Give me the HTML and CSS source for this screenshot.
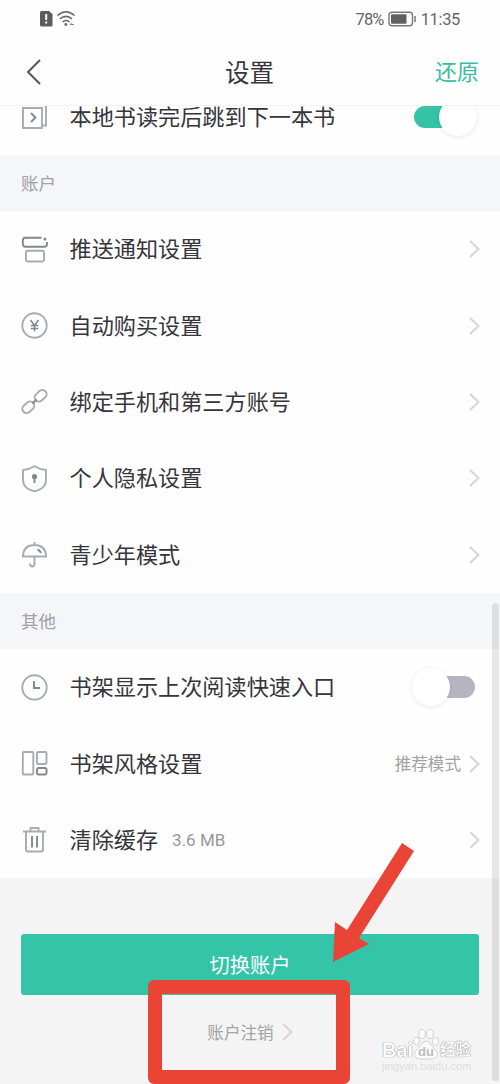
FILE: index.html
```html
<!DOCTYPE html>
<html lang="zh-CN">
  <head>
    <meta charset="utf-8">
    <title>设置</title>
    <link rel="stylesheet" href="styles.css">
  </head>
  <body>
    <svg class="defs" width="0" height="0">
      <symbol id="chevron" viewBox="0 0 12 20">
        <path d="M2 2 10.500 10 2 18" />
      </symbol>
    </svg>

    <div class="screen">
      <div class="status-bar">
        <svg class="status-left" width="38" height="18" viewBox="0 0 38 18">
          <path d="M3.500 1H11l3.500 3v11q0 1.500-1.500 1.500H3.500Q2 16.500 2 15V2.500Q2 1 3.500 1Z" fill="#5c5c5c" />
          <path d="M8.200 4v6M8.200 11.500v2" stroke="#fff" stroke-width="2" />
          <g fill="none" stroke="#666" stroke-width="1.600">
            <path d="M19.500 5.500q8.500-7.500 17 0M22 8.800q6-5 12 0M24.500 12q3.500-3 7 0" />
          </g>
          <circle cx="27.800" cy="14.500" r="1.400" fill="#666" />
          <path d="m34 12.500-2 2h4" fill="none" stroke="#888" />
        </svg>
        <div class="status-right">
          <span class="percent">78%</span>
          <svg width="28" height="16" viewBox="0 0 28 16">
            <rect x="1" y="1.200" width="23.500" height="13.500" rx="3" fill="none" stroke="#777" stroke-width="1.400" />
            <rect x="3" y="3.200" width="15.500" height="9.500" rx="1" fill="#606060" />
            <path d="M27 5v6" stroke="#777" stroke-width="1.500" />
          </svg>
          <span class="time">11:35</span>
        </div>
      </div>

      <header class="header">
        <svg class="back" width="16" height="26" viewBox="0 0 16 26">
          <path d="M14 1 2 13l12 12" />
        </svg>
        <h1>设置</h1>
        <span class="reset">还原</span>
      </header>

      <main class="content">
        <div class="list list-top">
          <div class="row">
            <svg class="icon" viewBox="0 0 27 27">
              <path d="M2 5h19v20H2zM21.500 22.500H25V3" />
              <path class="dark" d="m10 10 4.500 4.500L10 19" />
            </svg>
            <span class="label">本地书读完后跳到下一本书</span>
            <span class="switch on"></span>
          </div>
        </div>

        <h2>账户</h2>
        <div class="list">
          <div class="row">
            <svg class="icon" viewBox="0 0 27 27">
              <path class="dark" d="M20.500 1.800H4.500Q1.800 1.800 1.800 4.500v3Q1.800 10.800 4.500 10.800h18.500Q26 10.800 26 8V6" />
              <circle cx="24" cy="3" r="1.500" class="dot" />
              <rect x="5" y="14.800" width="18" height="10.700" rx="1.500" />
            </svg>
            <span class="label">推送通知设置</span>
            <svg class="arrow"><use href="#chevron" /></svg>
          </div>
          <div class="row">
            <svg class="icon" viewBox="0 0 27 27">
              <circle cx="13.500" cy="13.500" r="12.200" />
              <path class="dark thin" d="m9.500 8 4 5.500 4-5.500M13.500 13.500v6M9.800 13.500h7.400M9.800 16.500h7.400" />
            </svg>
            <span class="label">自动购买设置</span>
            <svg class="arrow"><use href="#chevron" /></svg>
          </div>
          <div class="row">
            <svg class="icon" viewBox="0 0 27 27">
              <g transform="rotate(-43 13.500 13.500)">
                <rect x="-1.500" y="9.300" width="13.200" height="8.400" rx="4.200" />
                <rect x="15.300" y="9.300" width="13.200" height="8.400" rx="4.200" />
                <path class="dark" d="M10.500 13.500h6" />
              </g>
            </svg>
            <span class="label">绑定手机和第三方账号</span>
            <svg class="arrow"><use href="#chevron" /></svg>
          </div>
          <div class="row">
            <svg class="icon" viewBox="0 0 27 27">
              <path d="M13.500 1.200Q19 4.500 25 5v9.500q0 6-4.500 9-4 2.500-7 2.800-3-.3-7-2.800-4.500-3-4.500-9V5Q8 4.500 13.500 1.200Z" />
              <circle cx="13.500" cy="11.500" r="2.600" class="dot" />
              <path class="dark" d="M13.500 12v6" />
            </svg>
            <span class="label">个人隐私设置</span>
            <svg class="arrow"><use href="#chevron" /></svg>
          </div>
          <div class="row">
            <svg class="icon" viewBox="0 0 27 27">
              <path d="M13.500 1v3M1.800 15.500Q2.500 4 13.500 4t11.700 11.500ZM13.500 15.500v7q0 3-2.200 3-2.300 0-2.300-3" />
              <path class="dark" d="M16.500 8.500q2.500 1 3.500 3.500" />
            </svg>
            <span class="label">青少年模式</span>
            <svg class="arrow"><use href="#chevron" /></svg>
          </div>
        </div>

        <h2>其他</h2>
        <div class="list">
          <div class="row">
            <svg class="icon" viewBox="0 0 27 27">
              <circle cx="13.500" cy="13.500" r="12.200" />
              <path class="dark" d="M13 7v7h6" />
            </svg>
            <span class="label">书架显示上次阅读快速入口</span>
            <span class="switch"></span>
          </div>
          <div class="row">
            <svg class="icon" viewBox="0 0 27 27">
              <rect x="1.800" y="2" width="10.500" height="22.500" rx="1" />
              <rect x="16" y="2" width="9.500" height="12" rx="1" />
              <rect class="dark" x="16" y="18" width="9.500" height="6.500" rx="1.800" />
            </svg>
            <span class="label">书架风格设置</span>
            <span class="value">推荐模式</span>
            <svg class="arrow"><use href="#chevron" /></svg>
          </div>
          <div class="row">
            <svg class="icon" viewBox="0 0 27 27">
              <path d="M2 5.500h23M9.500 5V2h8v3M5 5.500v18q0 2 2 2h13q2 0 2-2v-18" />
              <path class="dark" d="M11 10v11.500M16 10v11.500" />
            </svg>
            <span class="label">清除缓存</span>
            <span class="size">3.6 MB</span>
            <svg class="arrow"><use href="#chevron" /></svg>
          </div>
        </div>

        <div class="footer">
          <div class="switch-account">切换账户</div>
          <div class="cancel-account">
            <span>账户注销</span>
            <svg class="arrow"><use href="#chevron" /></svg>
          </div>
        </div>
      </main>

      <div class="scrollbar"></div>

      <div class="mark-box"></div>
      <svg class="mark-arrow" width="82" height="122" viewBox="0 0 82 122">
        <path d="M70 0 82 8 27 95 37 101 1 119 3 79 15 87Z" />
      </svg>

      <div class="watermark">
        <div class="logo">
          <span class="bai">Bai</span>
          <svg width="26" height="31" viewBox="0 0 26 31">
            <ellipse cx="3.500" cy="12" rx="3" ry="4" />
            <ellipse cx="9" cy="5" rx="3.300" ry="4.500" />
            <ellipse cx="17" cy="5" rx="3.300" ry="4.500" />
            <ellipse cx="22.500" cy="12.500" rx="3" ry="4" />
            <path d="M13 12q3 0 5 4 4 4 6 7 2 6-5 7H7q-7-1-5-7 2-3 6-7 2-4 5-4Z" />
            <text x="13" y="27" text-anchor="middle">du</text>
          </svg>
          <span class="exp">经验</span>
        </div>
        <div class="site">jingyan.baidu.com</div>
      </div>
    </div>
  </body>
</html>
```
FILE: styles.css
```css
* {
  box-sizing: border-box;
}

body {
  margin: 0;
  background: #f4f4f4;
  color: #35353b;
  font-family: Roboto, "Noto Sans CJK SC", sans-serif;
}

.defs {
  position: absolute;
}

.screen {
  position: relative;
  display: flex;
  flex-direction: column;
  height: 1084px;
  overflow: hidden;
}

.status-bar {
  display: flex;
  justify-content: space-between;
  align-items: center;
  height: 38px;
  padding: 0 40px 0 38px;
  background: #fefefe;
  color: #666;
  font-size: 16.5px;
}

.status-right {
  display: flex;
  align-items: center;
}

.percent {
  letter-spacing: -0.8px;
  margin-right: 4px;
}

.time {
  margin-left: 5px;
  letter-spacing: -0.35px;
}

.header {
  position: relative;
  z-index: 1;
  display: grid;
  grid-template-columns: 1fr auto 1fr;
  align-items: center;
  height: 68px;
  padding: 0 21px 0 26px;
  background: #fefefe;
  border-bottom: 1px solid #f3f3f3;
}

.header h1 {
  margin: 0 0 0 -6px;
  font-size: 24.5px;
  font-weight: 400;
}

.back {
  fill: none;
  stroke: #55555b;
  stroke-width: 2;
}

.reset {
  justify-self: end;
  margin-bottom: 3px;
  color: #38bd9f;
  font-size: 22px;
}

.content {
  flex: 1;
  display: flex;
  flex-direction: column;
}

.list {
  background: #fefefe;
}

.list-top {
  display: flex;
  flex-direction: column;
  justify-content: flex-end;
  flex: none;
  height: 49px;
}

.list-top .row {
  flex: none;
}

.row {
  display: flex;
  align-items: center;
  height: 76.4px;
  padding: 0 20px 0 21px;
}

.icon {
  flex: none;
  width: 27px;
  height: 27px;
  margin-right: 21.5px;
  overflow: visible;
  fill: none;
  stroke: #a9abb4;
  stroke-width: 1.9;
}

.icon .dark {
  stroke: #85868f;
}

.icon .thin {
  stroke-width: 1.5;
}

.icon .dot {
  fill: #85868f;
  stroke: none;
}

.label {
  font-size: 22.15px;
  line-height: 32px;
}

.list-top .label {
  line-height: 22px;
}

.arrow {
  flex: none;
  width: 12px;
  height: 20px;
  margin-left: auto;
  fill: none;
  stroke: #d6d6d8;
  stroke-width: 2;
}

.value {
  margin-left: auto;
  margin-bottom: 2px;
  color: #a2a2a5;
  font-size: 16.6px;
}

.value + .arrow {
  margin-left: 7px;
}

.size {
  margin-left: 14px;
  color: #97979b;
  font-size: 17px;
}

h2 {
  flex: none;
  height: 56px;
  margin: 0;
  padding-left: 21px;
  background: #f5f6f8;
  color: #a0a0a6;
  font-size: 17.5px;
  font-weight: 400;
  line-height: 58px;
}

.switch {
  display: flex;
  align-items: center;
  width: 60px;
  height: 22px;
  margin-left: auto;
  margin-right: 5px;
  border-radius: 11px;
  background: linear-gradient(to right, transparent 50%, #b6b4c0 50%);
}

.switch::before {
  content: "";
  flex: none;
  width: 38px;
  height: 38px;
  margin-left: -3px;
  border-radius: 50%;
  background: #fff;
  box-shadow: 0 1px 5px rgba(0, 0, 0, 0.09);
}

.switch.on {
  justify-content: flex-end;
  margin-right: 6px;
  background: linear-gradient(to right, #34c3a5 50%, transparent 50%);
}

.switch.on::before {
  margin-right: -3px;
}

.footer {
  padding: 56px 21px 0;
}

.switch-account {
  height: 61px;
  border-radius: 3px;
  background: #34c4a7;
  color: #fff;
  font-size: 20.3px;
  line-height: 64px;
  text-align: center;
}

.cancel-account {
  display: flex;
  justify-content: center;
  align-items: center;
  height: 74px;
  color: #a3a3a5;
  font-size: 16.6px;
}

.cancel-account .arrow {
  margin-left: 7px;
}

.scrollbar {
  position: absolute;
  top: 603px;
  right: 1px;
  width: 7px;
  height: 478px;
  border-radius: 4px;
  background: rgba(0, 0, 0, 0.09);
}

/* annotation on top of the page */
.mark-box {
  position: absolute;
  left: 148px;
  top: 980px;
  width: 202px;
  height: 104px;
  border: 14px solid #e94436;
  border-radius: 6px;
}

.mark-arrow {
  position: absolute;
  left: 332px;
  top: 843px;
  fill: #e94436;
}

.watermark {
  position: absolute;
  left: 382px;
  top: 1029px;
  width: 92px;
  color: #fcfcfc;
  text-shadow: 0 0 1px #888, 0 0 1px #999;
}

.logo {
  display: flex;
  align-items: flex-end;
  height: 31px;
}

.bai {
  width: 31px;
  font: bold 20px/20px "Liberation Sans", sans-serif;
}

.logo svg {
  flex: none;
  overflow: visible;
  fill: #fcfcfc;
  stroke: #c8c8c8;
  stroke-width: 0.8;
}

.logo text {
  fill: #bcbcbc;
  stroke: none;
  font: bold 13px "Liberation Sans", sans-serif;
  text-shadow: none;
}

.exp {
  margin-left: 1px;
  font-size: 15.5px;
  font-weight: 700;
  line-height: 20px;
}

.site {
  color: #dedede;
  font: 11.1px/13px "Liberation Sans", sans-serif;
  white-space: nowrap;
  text-shadow: none;
}
```
